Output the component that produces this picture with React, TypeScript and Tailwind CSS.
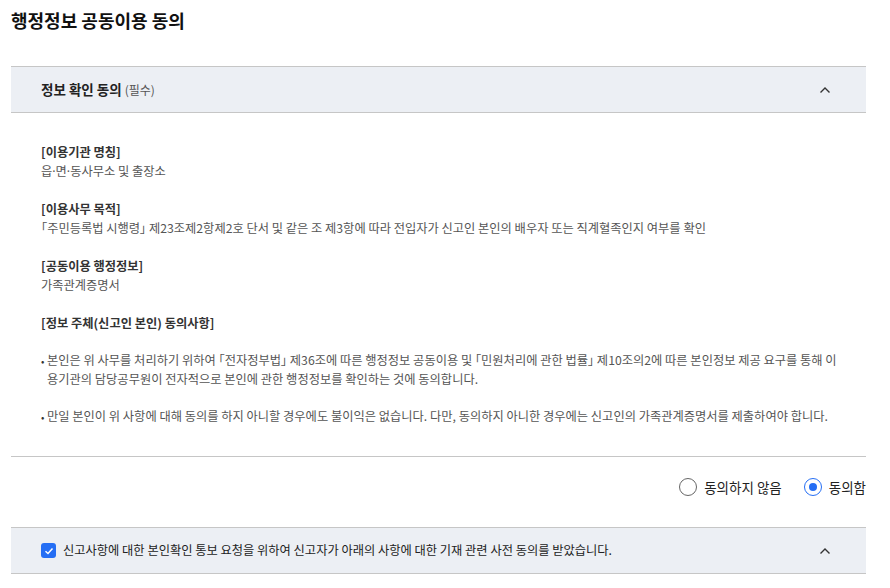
import React, { useState } from 'react';

const sections = [
  { title: '[이용기관 명칭]', body: '읍·면·동사무소 및 출장소' },
  {
    title: '[이용사무 목적]',
    body: '「주민등록법 시행령」 제23조제2항제2호 단서 및 같은 조 제3항에 따라 전입자가 신고인 본인의 배우자 또는 직계혈족인지 여부를 확인',
  },
  { title: '[공동이용 행정정보]', body: '가족관계증명서' },
];

const bullets = [
  '본인은 위 사무를 처리하기 위하여 「전자정부법」 제36조에 따른 행정정보 공동이용 및 「민원처리에 관한 법률」 제10조의2에 따른 본인정보 제공 요구를 통해 이용기관의 담당공무원이 전자적으로 본인에 관한 행정정보를 확인하는 것에 동의합니다.',
  '만일 본인이 위 사항에 대해 동의를 하지 아니할 경우에도 불이익은 없습니다. 다만, 동의하지 아니한 경우에는 신고인의 가족관계증명서를 제출하여야 합니다.',
];

// CJK brackets and middle dots are set narrow, as in the original
const Txt = ({ text }: { text: string }) => (
  <>
    {text.split(/([「」·])/).map((part, i) => {
      if (part === '「' || part === '」')
        return (
          <span key={i} className="[font-feature-settings:'palt']">
            {part}
          </span>
        );
      if (part === '·')
        return (
          <span key={i} style={{ fontFamily: '"Noto Sans", sans-serif' }}>
            {part}
          </span>
        );
      return <React.Fragment key={i}>{part}</React.Fragment>;
    })}
  </>
);

const ChevronUp = () => (
  <svg width="14" height="14" viewBox="0 0 14 14" fill="none" className="text-[#333]">
    <path d="M2.5 9.5 7 5l4.5 4.5" stroke="currentColor" strokeWidth="1.4" />
  </svg>
);

const Radio = ({ checked, label, onClick }: { checked: boolean; label: string; onClick: () => void }) => (
  <button type="button" onClick={onClick} className="flex items-center gap-[7px]">
    <span
      className={
        checked
          ? 'flex h-[18px] w-[18px] items-center justify-center rounded-full border border-[#256ef4]'
          : 'h-[18px] w-[18px] rounded-full border border-[#666]'
      }
    >
      {checked && <span className="h-[8px] w-[8px] rounded-full bg-[#256ef4]" />}
    </span>
    <span className="text-[13.5px] text-[#222]">{label}</span>
  </button>
);

const App = () => {
  const [agree, setAgree] = useState(true);

  return (
    <div
      className="w-[890px] bg-white px-[11px] pt-[7px]"
      style={{ fontFamily: '"Noto Sans CJK KR", "Noto Sans", sans-serif' }}
    >
      <h1 className="text-[18px] font-bold leading-[26px] text-[#111]">행정정보 공동이용 동의</h1>

      <div className="mt-[33px] w-[855px]">
        <div className="flex h-[47px] items-center justify-between border-y border-[#c6c6c6] bg-[#eceff4] pl-[30px] pr-[34px]">
          <div className="text-[13.5px] text-[#222]">
            <span className="font-bold">정보 확인 동의</span>{' '}
            <span className="text-[12px] text-[#555]">(필수)</span>
          </div>
          <ChevronUp />
        </div>

        <div className="pl-[30px] pr-[22px] pt-[30px] pb-[30px] text-[12.25px] leading-[19px] text-[#555]">
          {sections.map((s) => (
            <div key={s.title} className="mb-[19px]">
              <div className="font-bold text-[#333]">{s.title}</div>
              <div>
                <Txt text={s.body} />
              </div>
            </div>
          ))}
          <div className="font-bold text-[#333]">[정보 주체(신고인 본인) 동의사항]</div>
          <ul className="mt-[18px] flex flex-col gap-[18px]">
            {bullets.map((b) => (
              <li key={b} className="flex">
                <span className="w-[6px] shrink-0 text-[10px] text-[#333]">•</span>
                <span>
                  <Txt text={b} />
                </span>
              </li>
            ))}
          </ul>
        </div>

        <div className="border-t border-[#c6c6c6]" />

        <div className="flex h-[60px] items-center justify-end gap-[22px]">
          <Radio checked={!agree} label="동의하지 않음" onClick={() => setAgree(false)} />
          <Radio checked={agree} label="동의함" onClick={() => setAgree(true)} />
        </div>

        <div className="mt-[10px] flex h-[47px] items-center justify-between border-y border-[#c6c6c6] bg-[#eceff4] pl-[30px] pr-[34px]">
          <label className="flex items-center gap-[7px] text-[12.25px] text-[#222]">
            <span className="flex h-[15px] w-[15px] items-center justify-center rounded-[3px] bg-[#256ef4]">
              <svg width="10" height="10" viewBox="0 0 10 10" fill="none">
                <path d="M1.5 5.2 4 7.5 8.5 2.5" stroke="white" strokeWidth="1.5" />
              </svg>
            </span>
            신고사항에 대한 본인확인 통보 요청을 위하여 신고자가 아래의 사항에 대한 기재 관련 사전 동의를 받았습니다.
          </label>
          <ChevronUp />
        </div>
      </div>
    </div>
  );
};

export default App;
